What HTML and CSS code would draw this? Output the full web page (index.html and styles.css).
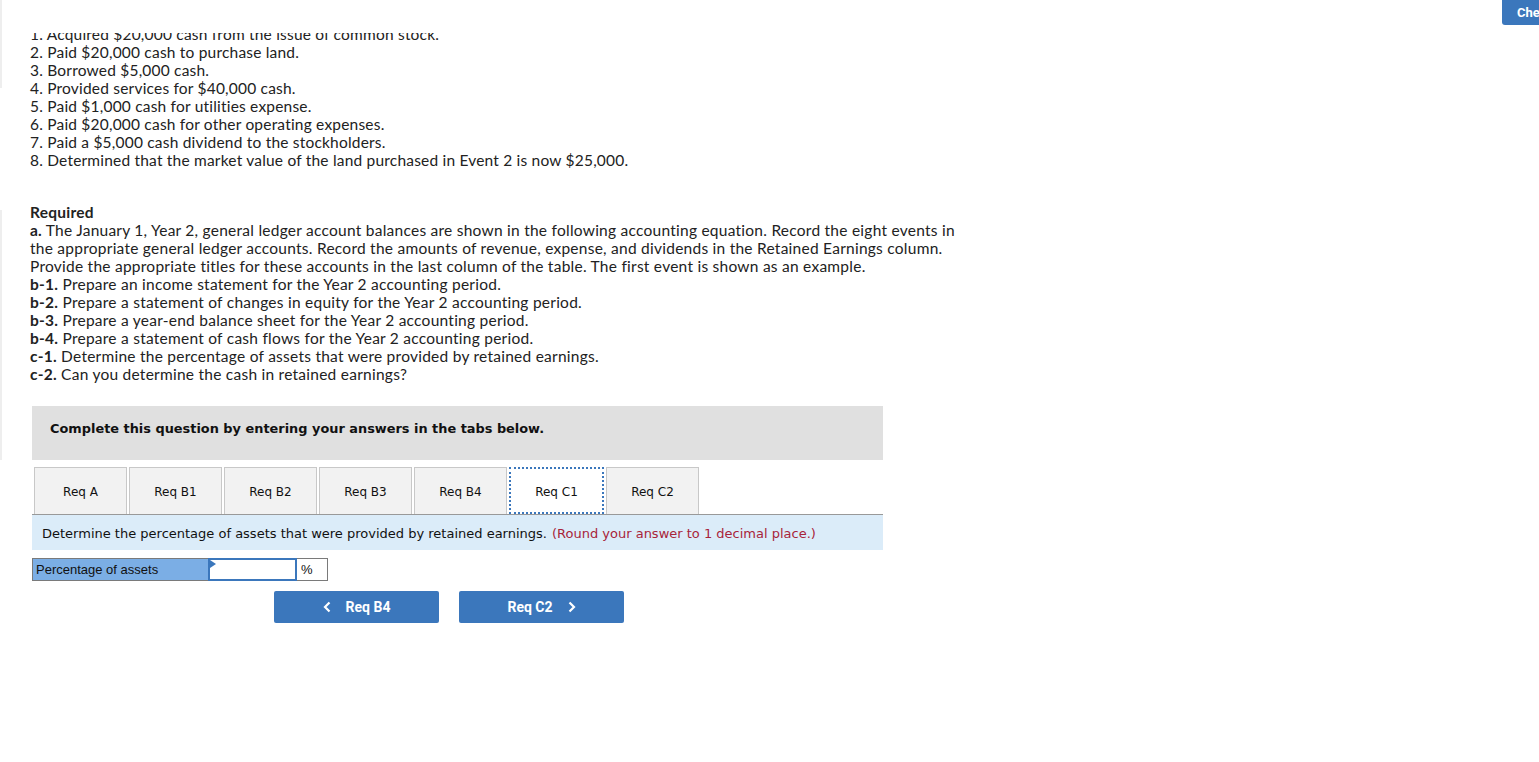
FILE: index.html
```html
<!DOCTYPE html>
<html>
<head>
<meta charset="utf-8">
<link rel="stylesheet" href="styles.css">
</head>
<body>
<div class="page">
  <div class="rail">
    <div class="rail-seg seg1"></div>
    <div class="rail-gap"></div>
    <div class="rail-seg seg2"></div>
  </div>
  <div class="main">
    <div class="topbar">
      <button class="check-btn">Check my work</button>
    </div>
    <div class="scroll">
      <ol class="events">
        <li>1. Acquired $20,000 cash from the issue of common stock.</li>
        <li>2. Paid $20,000 cash to purchase land.</li>
        <li>3. Borrowed $5,000 cash.</li>
        <li>4. Provided services for $40,000 cash.</li>
        <li>5. Paid $1,000 cash for utilities expense.</li>
        <li>6. Paid $20,000 cash for other operating expenses.</li>
        <li>7. Paid a $5,000 cash dividend to the stockholders.</li>
        <li>8. Determined that the market value of the land purchased in Event 2 is now $25,000.</li>
      </ol>
      <div class="required">
        <div class="req-title">Required</div>
        <p><b>a.</b> The January 1, Year 2, general ledger account balances are shown in the following accounting equation. Record the eight events in<br>the appropriate general ledger accounts. Record the amounts of revenue, expense, and dividends in the Retained Earnings column.<br>Provide the appropriate titles for these accounts in the last column of the table. The first event is shown as an example.</p>
        <p><b>b-1.</b> Prepare an income statement for the Year 2 accounting period.</p>
        <p><b>b-2.</b> Prepare a statement of changes in equity for the Year 2 accounting period.</p>
        <p><b>b-3.</b> Prepare a year-end balance sheet for the Year 2 accounting period.</p>
        <p><b>b-4.</b> Prepare a statement of cash flows for the Year 2 accounting period.</p>
        <p><b>c-1.</b> Determine the percentage of assets that were provided by retained earnings.</p>
        <p><b>c-2.</b> Can you determine the cash in retained earnings?</p>
      </div>
      <div class="question">
        <div class="q-header">Complete this question by entering your answers in the tabs below.</div>
        <div class="tabs">
          <div class="tab">Req A</div>
          <div class="tab">Req B1</div>
          <div class="tab">Req B2</div>
          <div class="tab">Req B3</div>
          <div class="tab">Req B4</div>
          <div class="tab active">Req C1</div>
          <div class="tab">Req C2</div>
        </div>
        <div class="info">Determine the percentage of assets that were provided by retained earnings. <span class="hint">(Round your answer to 1 decimal place.)</span></div>
        <div class="answer-row">
          <div class="label-cell">Percentage of assets</div>
          <div class="input-cell"><span class="flag"></span></div>
          <div class="unit-cell">%</div>
        </div>
        <div class="nav">
          <button class="nav-btn prev"><svg class="chev" viewBox="0 0 8 12" width="8" height="12"><path d="M6.5 1.5 L2 6 L6.5 10.5" fill="none" stroke="#fff" stroke-width="2.2"/></svg><span>Req B4</span></button>
          <button class="nav-btn next"><span>Req C2</span><svg class="chev" viewBox="0 0 8 12" width="8" height="12"><path d="M1.5 1.5 L6 6 L1.5 10.5" fill="none" stroke="#fff" stroke-width="2.2"/></svg></button>
        </div>
      </div>
    </div>
  </div>
</div>
</body>
</html>
```
FILE: styles.css
```css
* { box-sizing: border-box; }
html, body { margin: 0; padding: 0; background: #fff; }
body { font-family: Lato, "Open Sans", sans-serif; color: #222; overflow: hidden; }

.page { display: flex; width: 1539px; height: 762px; overflow: hidden; }

.rail { width: 2px; display: flex; flex-direction: column; flex: none; }
.rail-seg { width: 2px; background: #eeeeee; }
.seg1 { height: 88px; }
.rail-gap { height: 122px; }
.seg2 { height: 250px; }

.main { flex: 1; min-width: 0; display: flex; flex-direction: column; }

.topbar { height: 33px; display: flex; justify-content: flex-end; align-items: flex-start; flex: none; }
.check-btn {
  width: 120px; height: 25px; margin-right: -83px; padding: 0 0 0 15px;
  background: #3b77bc; color: #fff; border: none; border-radius: 0 0 3px 3px;
  font-family: Roboto, "Liberation Sans", sans-serif; font-weight: 700; font-size: 13px;
  white-space: nowrap; text-align: left;
}

.scroll { flex: 1; overflow: hidden; padding-left: 28px; }

.events { list-style: none; margin: -8px 0 0 0; padding: 0; font-size: 15.5px; line-height: 18px; letter-spacing: 0.2px; }

.required { margin-top: 34px; font-size: 15.5px; line-height: 18px; letter-spacing: 0.25px; }
.req-title { font-weight: 700; }
.required p { margin: 0; }
.required b { font-weight: 700; }

.question { margin-top: 23px; margin-left: 2px; width: 851px; font-family: "DejaVu Sans", Verdana, sans-serif; }
.q-header { height: 54px; background: #e0e0e0; padding: 15px 0 0 18px; font-weight: 700; font-size: 12.9px; line-height: 16px; color: #111; }

.tabs { display: flex; gap: 2px; margin-top: 7px; padding-left: 2px; border-bottom: 1px solid #999; }
.tab { width: 93px; height: 47px; padding-top: 2px; background: #f2f2f2; border: 1px solid #c8c8c8; border-bottom: none; display: flex; align-items: center; justify-content: center; font-size: 12px; color: #111; }
.tab.active { background: #fff; border: 2px dotted #3b77bc; width: 95px; }

.info { height: 35px; padding: 2px 0 0 10px; background: #dbecf9; display: flex; align-items: center; font-size: 13px; color: #111; }
.hint { color: #a8243a; margin-left: 5px; }

.answer-row { display: flex; margin-top: 8px; height: 23px; }
.label-cell { width: 176px; background: #7baee5; border: 1px solid #7a7a7a; border-right: none; font-family: "Liberation Sans", Arial, sans-serif; font-size: 13px; padding-left: 3px; display: flex; align-items: center; color: #111; }
.input-cell { width: 89px; border: 2px solid #3b77bc; background: #fff; position: relative; }
.flag { position: absolute; left: 0; top: 0; width: 0; height: 0; border-top: 4px solid transparent; border-bottom: 4px solid transparent; border-left: 6px solid #3b77bc; }
.unit-cell { width: 31px; border: 1px solid #7a7a7a; border-left: none; background: #fff; font-family: "Liberation Sans", Arial, sans-serif; font-size: 13px; padding-left: 4px; display: flex; align-items: center; color: #111; }

.nav { display: flex; gap: 20px; margin-top: 10px; margin-left: 242px; }
.nav-btn { width: 165px; height: 32px; background: #3b77bc; border: none; border-radius: 2px; color: #fff; font-family: Roboto, "Liberation Sans", sans-serif; font-weight: 700; font-size: 14px; display: flex; align-items: center; justify-content: center; gap: 15px; padding: 0; }
.chev { display: block; }
```
